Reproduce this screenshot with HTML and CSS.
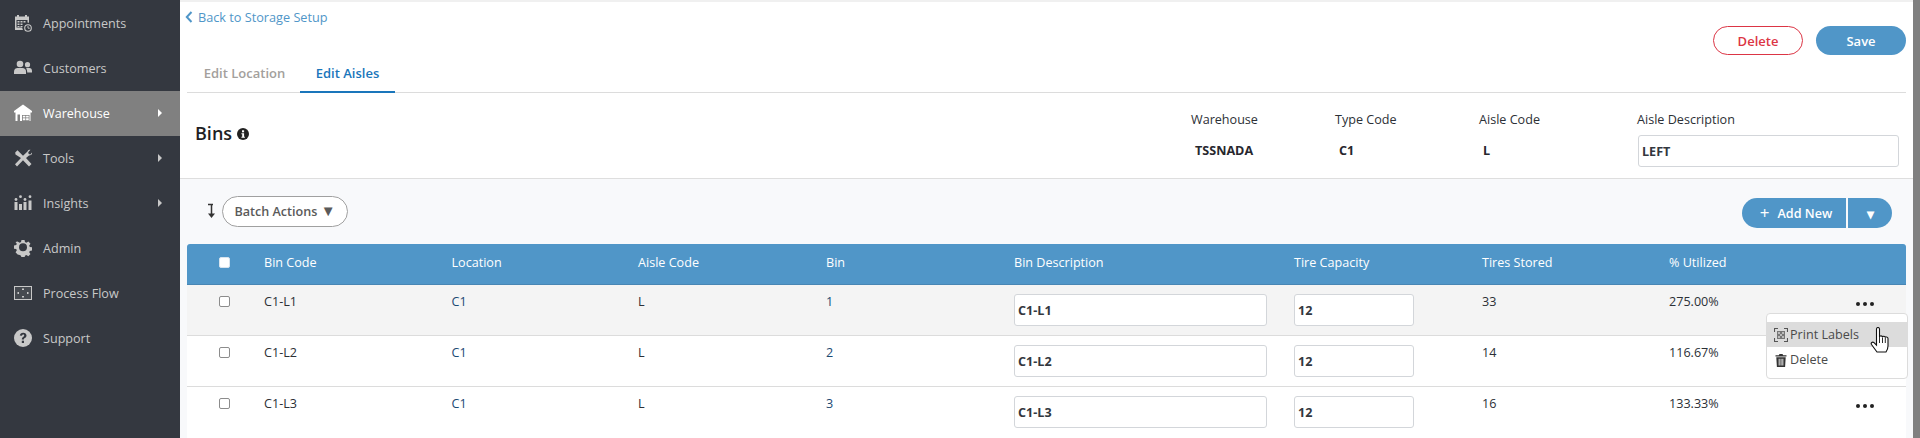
FILE: index.html
```html
<!DOCTYPE html>
<html lang="en">
<head>
<meta charset="utf-8">
<title>Bins</title>
<link rel="stylesheet" href="styles.css">
</head>
<body>
<div class="app">
  <nav class="sidebar">
    <a class="nav-item"><svg class="nav-icon" viewBox="0 0 18 18"><path d="M1 2.500h2V1h2v1.500h6V1h2v1.500h2v6.300a5 5 0 0 0-6 7.200H1z" fill="#c8c8c8"/><path d="M2.500 6h11v3h-2v2h-2v2.500h-7z" fill="#343840"/><path d="M3.500 7h2v1.500h-2zM6.500 7h2v1.500h-2zM9.500 7h2v1.500h-2zM3.500 9.500h2V11h-2zM6.500 9.500h2V11h-2zM3.500 12h2v1h-2zM6.500 12h2v1h-2z" fill="#c8c8c8"/><circle cx="14" cy="14" r="3.300" fill="none" stroke="#c8c8c8" stroke-width="1.100"/><path d="M14 12v2.200h1.800" fill="none" stroke="#c8c8c8" stroke-width=".9"/></svg><span>Appointments</span></a>
    <a class="nav-item"><svg class="nav-icon" viewBox="0 0 18 18"><circle cx="6" cy="5" r="3.300" fill="#c8c8c8"/><circle cx="13.500" cy="5.700" r="2.600" fill="#c8c8c8"/><path d="M0 15v-2.500C0 10 2 9 3.500 9h5C10.500 9 12 10.500 12 12.500V15z" fill="#c8c8c8"/><path d="M13 9h2.500C17 9 18 10.200 18 12v1.500h-4.800c0-1.800-.2-3-1.200-4z" fill="#c8c8c8"/></svg><span>Customers</span></a>
    <a class="nav-item is-active"><svg class="nav-icon" viewBox="0 0 18 18"><path d="M9 .5 18 7v1.500h-1.500V17h-15V8.500H0V7z" fill="#fff"/><path d="M3.500 10.500h2.500V17H3.500zM8 11h7.500v6H8z" fill="#808080"/><path d="M8.800 11.700h2.600v1.900H8.800zM12.100 11.700h2.600v1.900h-2.600zM8.800 14.300h2.600v1.900H8.800zM12.100 14.300h2.600v1.900h-2.600z" fill="#fff"/></svg><span>Warehouse</span><i class="nav-caret"></i></a>
    <a class="nav-item"><svg class="nav-icon" viewBox="0 0 18 18"><path d="M1.200 3.500 3.500 1.200 9 6.700 13.500 2.500C14 1 15 .8 16.500.8l-2.300 2.400.5 1.700 1.700.5L18.500 3c0 2-1 3.500-3.500 3.500L12 9l5.500 6-2.500 2.500L9 11.300 3 17.400 1 15.200 7 9 1.500 5.500z" fill="#c8c8c8"/></svg><span>Tools</span><i class="nav-caret"></i></a>
    <a class="nav-item"><svg class="nav-icon" viewBox="0 0 18 18"><g fill="#c8c8c8"><rect x=".5" y="8" width="3" height="8"/><rect x="5" y="10" width="3" height="6"/><rect x="9.500" y="8" width="3" height="8"/><rect x="14.500" y="6.500" width="3" height="9.500"/><circle cx="2" cy="5.500" r="1.400"/><circle cx="6.500" cy="2.700" r="1.400"/><circle cx="11" cy="5.500" r="1.400"/><circle cx="16" cy="2.700" r="1.400"/></g></svg><span>Insights</span><i class="nav-caret"></i></a>
    <a class="nav-item"><svg class="nav-icon" viewBox="0 0 18 18"><path d="M7.300 0h3.400l.5 2.400 1.500.7L15 1.800l2.300 2.500-1.400 2 .6 1.500 2.500.5v3.400l-2.500.5-.6 1.500 1.400 2-2.300 2.500-2.300-1.300-1.500.7-.5 2.400H7.300l-.5-2.400-1.500-.7L3 16.200.7 13.700l1.400-2-.6-1.500L-1 9.700V6.300l2.500-.5.6-1.500-1.400-2L3 1.800l2.300 1.300 1.500-.7z" transform="translate(.9 .9) scale(.9)" fill="#c8c8c8"/><circle cx="9" cy="8.300" r="4" fill="#343840"/></svg><span>Admin</span></a>
    <a class="nav-item"><svg class="nav-icon" viewBox="0 0 18 18"><rect x=".5" y="2.500" width="17" height="13" fill="#464a50" stroke="#c8c8c8"/><path d="M8 4.500h2v1.500H8zM8 12h2v1.500H8zM3.500 8h1.500v2H3.500zM13 8h1.500v2H13z" fill="#c8c8c8"/></svg><span>Process Flow</span></a>
    <a class="nav-item"><svg class="nav-icon" viewBox="0 0 18 18"><circle cx="9" cy="9" r="9" fill="#c8c8c8"/><path d="M5.800 6.600C6 4.700 7.300 3.700 9.200 3.700c2 0 3.300 1.200 3.300 2.800 0 1.400-.8 2-1.700 2.600-.7.500-.9.800-.9 1.500H7.800c0-1.300.4-2 1.300-2.600.7-.5 1.100-.8 1.100-1.400 0-.6-.4-1-1-1-.7 0-1.100.4-1.200 1.100z" fill="#343840"/><rect x="7.800" y="11.700" width="2.200" height="2.300" fill="#343840"/></svg><span>Support</span></a>
  </nav>

  <main class="content">
    <header class="top">
      <div class="top-bar">
        <a class="back"><svg class="back-icon" viewBox="0 0 8 12"><path d="M6.500 1 1.800 6l4.700 5" fill="none" stroke="#5096c8" stroke-width="2"/></svg>Back to Storage Setup</a>
        <div class="actions">
          <button class="btn btn-delete">Delete</button>
          <button class="btn btn-save">Save</button>
        </div>
      </div>
      <div class="tabs">
        <a class="tab">Edit Location</a>
        <a class="tab is-current">Edit Aisles</a>
      </div>
      <div class="details">
        <h1 class="title">Bins <svg class="info" viewBox="0 0 12 12"><circle cx="6" cy="6" r="6" fill="#222"/><rect x="5" y="2.300" width="2.100" height="2" fill="#fff"/><path d="M4.400 5.200h2.700v3.500h.8v1.100H4.400V8.700h.8V6.300h-.8z" fill="#fff"/></svg></h1>
        <div class="meta">
          <div class="meta-col mc-1"><span class="meta-label">Warehouse</span><b class="meta-value">TSSNADA</b></div>
          <div class="meta-col mc-2"><span class="meta-label">Type Code</span><b class="meta-value">C1</b></div>
          <div class="meta-col mc-3"><span class="meta-label">Aisle Code</span><b class="meta-value">L</b></div>
          <div class="meta-col mc-4"><span class="meta-label">Aisle Description</span><input class="field field-desc" value="LEFT"></div>
        </div>
      </div>
    </header>

    <section class="panel">
      <div class="toolbar">
        <div class="batch">
          <svg class="sort-icon" viewBox="0 0 9 16"><path d="M1 1.500h5M4.500 1.500v11" fill="none" stroke="#333" stroke-width="1.500"/><path d="M1 10.500h7L4.500 15z" fill="#333"/></svg>
          <button class="pill">Batch Actions <span class="pill-caret">▼</span></button>
        </div>
        <div class="split">
          <button class="split-main"><span class="plus">+</span>Add New</button>
          <button class="split-arrow">▾</button>
        </div>
      </div>

      <div class="table">
        <div class="row row-head">
          <div class="cell cell-check"><span class="check check-head"></span></div>
          <div class="cell">Bin Code</div>
          <div class="cell">Location</div>
          <div class="cell">Aisle Code</div>
          <div class="cell">Bin</div>
          <div class="cell">Bin Description</div>
          <div class="cell">Tire Capacity</div>
          <div class="cell">Tires Stored</div>
          <div class="cell">% Utilized</div>
          <div class="cell"></div>
        </div>
        <div class="row row-body row-hover">
          <div class="cell cell-check"><span class="check"></span></div>
          <div class="cell">C1-L1</div>
          <div class="cell link">C1</div>
          <div class="cell">L</div>
          <div class="cell link">1</div>
          <div class="cell"><input class="field field-bin" value="C1-L1"></div>
          <div class="cell"><input class="field field-cap" value="12"></div>
          <div class="cell">33</div>
          <div class="cell">275.00%</div>
          <div class="cell cell-more"><span class="dots"><i></i><i></i><i></i></span>
            <div class="menu">
              <a class="menu-item is-hot"><svg class="menu-icon" viewBox="0 0 14 14"><path d="M.5 4V.5H4M10 .5h3.500V4M13.500 10v3.500H10M4 13.500H.5V10" fill="none" stroke="#555" stroke-width="1.100"/><rect x="3" y="3" width="8" height="8" fill="#777"/><path d="M4 4h2v2H4zM8 4h2v2H8zM6 6h2v2H6zM4 8h2v2H4zM8 8h2v2H8z" fill="#bbb"/></svg>Print Labels</a>
              <a class="menu-item"><svg class="menu-icon" viewBox="0 0 14 14"><path d="M1.500 2.200h3.300L5.500 1h3l.7 1.200h3.300v1.300h-11zM2.300 4.300h9.400l-.6 9.700H2.900z" fill="#333"/><path d="M4.700 5.800h.9v6.600h-.9zM6.600 5.800h.9v6.600h-.9zM8.400 5.800h.9v6.600h-.9z" fill="#fff"/></svg>Delete</a>
              <svg class="hand" viewBox="0 0 20 26"><path d="M6.500 2c0-2 3-2 3 0v8c0-1.500 3-1.500 3 .3 0-1.500 2.800-1.500 2.800.4 0-1.200 2.700-1 2.700.8v7.500c0 3-1 4.500-2 6H7c-1.500-2-3-4-5.500-7.500-1-1.500 1-3.200 2.500-1.800l2.500 2.500z" fill="#fff" stroke="#111" stroke-width="1.100"/><path d="M9.500 10v6M12.500 10.500v5.500M15.300 11v5" stroke="#111" stroke-width=".9" fill="none"/></svg>
            </div>
          </div>
        </div>
        <div class="row row-body">
          <div class="cell cell-check"><span class="check"></span></div>
          <div class="cell">C1-L2</div>
          <div class="cell link">C1</div>
          <div class="cell">L</div>
          <div class="cell link">2</div>
          <div class="cell"><input class="field field-bin" value="C1-L2"></div>
          <div class="cell"><input class="field field-cap" value="12"></div>
          <div class="cell">14</div>
          <div class="cell">116.67%</div>
          <div class="cell"></div>
        </div>
        <div class="row row-body row-last">
          <div class="cell cell-check"><span class="check"></span></div>
          <div class="cell">C1-L3</div>
          <div class="cell link">C1</div>
          <div class="cell">L</div>
          <div class="cell link">3</div>
          <div class="cell"><input class="field field-bin" value="C1-L3"></div>
          <div class="cell"><input class="field field-cap" value="12"></div>
          <div class="cell">16</div>
          <div class="cell">133.33%</div>
          <div class="cell cell-more"><span class="dots"><i></i><i></i><i></i></span></div>
        </div>
      </div>
    </section>
  </main>
  <div class="scrollbar"></div>
</div>
</body>
</html>
```
FILE: styles.css
```css
* { box-sizing: border-box; }
html, body { margin: 0; height: 438px; overflow: hidden; }
body { font-family: "Open Sans", "Noto Sans", sans-serif; font-size: 12.600px; color: #2c3036; background: #fff; }
button, input { font-family: inherit; }

.app { display: flex; height: 438px; }

.sidebar { width: 180px; flex: none; background: #343840; padding-top: 1px; }
.nav-item { display: flex; align-items: center; height: 45px; padding: 0 0 1px 14px; color: #c8c8c8; font-size: 12.600px; position: relative; }
.nav-item span { margin-left: 11px; }
.nav-icon { width: 18px; height: 18px; flex: none; }
.nav-item.is-active { background: #808080; color: #fff; }
.nav-caret { position: absolute; left: 158px; top: 18px; border-left: 4px solid currentColor; border-top: 4px solid transparent; border-bottom: 4px solid transparent; }

.content { flex: 1; min-width: 0; display: flex; flex-direction: column; border-top: 2px solid #f0f0f0; }
.scrollbar { width: 7px; flex: none; background: #808080; }

.top { padding: 0 7px 0 7px; background: #fff; }
.top-bar { display: flex; justify-content: space-between; height: 51px; }
.back { display: flex; align-items: center; gap: 5px; height: 14px; margin-top: 8px; margin-left: -2px; color: #5096c8; font-size: 12.700px; white-space: nowrap; }
.back-icon { width: 8px; height: 12px; }
.actions { display: flex; gap: 13px; padding-top: 24px; }
.btn { width: 90px; height: 29px; border-radius: 15px; font-size: 13px; font-weight: 600; padding: 0; }
.btn-delete { background: #fff; border: 1px solid #dc3545; color: #dc3545; }
.btn-save { background: #5096c8; border: 0; color: #fff; }

.tabs { display: flex; height: 40px; border-bottom: 1px solid #dcdcdc; padding-left: 2px; }
.tab { height: 40px; padding-top: 11px; font-weight: 600; font-size: 13px; color: #a3a09c; width: 111px; text-align: center; }
.tab.is-current { color: #1a76bb; border-bottom: 2px solid #1a76bb; width: 95px; }

.details { display: flex; justify-content: space-between; height: 86px; margin: 0 -7px; padding-left: 15px; border-bottom: 1px solid #dedede; }
.title { margin: 28px 0 0; font-size: 18px; font-weight: 600; color: #1f1f24; line-height: 24px; height: 24px; display: flex; align-items: center; gap: 5px; }
.info { width: 12px; height: 12px; margin-top: 2px; }
.meta { display: flex; width: 722px; padding-top: 18px; }
.meta-col { display: flex; flex-direction: column; }
.mc-1 { width: 144px; }
.mc-2 { width: 144px; }
.mc-3 { width: 158px; }
.mc-4 { width: 276px; }
.meta-label { height: 18px; line-height: 18px; white-space: nowrap; }
.meta-value { margin-top: 13px; margin-left: 4px; font-size: 12.600px; font-weight: 700; line-height: 18px; color: #27272e; }
.field { display: block; border: 1px solid #d3d6da; border-radius: 3px; background: #fff; font-size: 12.600px; font-weight: 700; color: #33373e; padding: 0 3px; outline: none; }
.field-desc { width: 261px; height: 32px; margin-top: 6px; margin-left: 1px; }

.panel { flex: 1; background: #f8f9fb; padding: 0 7px; min-height: 0; }
.toolbar { display: flex; justify-content: space-between; height: 65px; }
.batch { display: flex; align-items: flex-start; padding: 17px 0 0 20px; gap: 6px; }
.sort-icon { width: 9px; height: 16px; margin-top: 7px; }
.pill { width: 126px; height: 31px; border: 1px solid #a0a0a0; border-radius: 16px; background: #fff; color: #5a5a5a; font-size: 12.600px; font-weight: 600; padding: 0; }
.pill-caret { font-size: 15px; line-height: 1; }
.split { display: flex; gap: 2px; padding: 19px 14px 0 0; }
.split-main, .split-arrow { height: 30px; border: 0; background: #5096c8; color: #fff; font-size: 12.600px; font-weight: 600; padding: 0; }
.split-main { width: 104px; border-radius: 15px 0 0 15px; padding-left: 4px; }
.plus { font-size: 17px; font-weight: 400; margin-right: 8px; line-height: 1; vertical-align: -1px; }
.split-arrow { width: 44px; border-radius: 0 15px 15px 0; font-size: 14px; }

.table { background: #fff; }
.row { display: grid; grid-template-columns: 77px 187.500px 186.500px 188px 188px 280px 188px 187px 1fr 50px; }
.row-head { height: 41px; background: #5096c8; color: #fff; border-radius: 3px 3px 0 0; border-bottom: 1px solid #4886b4; align-items: center; }
.row-head .cell { margin-top: -2px; }
.row-head .cell-check { margin-top: -3px; }
.row-body { height: 51px; border-bottom: 1px solid #dcdcdc; background: #fff; padding-top: 8px; }
.row-hover { background: #f4f4f4; }
.row-last { border-bottom: 0; }
.cell { white-space: nowrap; color: inherit; line-height: 18px; }
.link { color: #1c4a73; }
.cell-check { padding-left: 32px; }
.check { display: block; width: 11px; height: 11px; border: 1px solid #8c8c8c; border-radius: 2px; background: #fff; margin-top: 3px; }
.check-head { border-color: #d8e4ee; margin-top: 0; }
.field-bin { width: 253px; height: 32px; margin-top: 1px; }
.field-cap { width: 120px; height: 32px; margin-top: 1px; }
.cell-more { position: relative; }
.dots { display: flex; gap: 3px; position: absolute; left: 0; top: 9px; }
.dots i { width: 4px; height: 4px; border-radius: 50%; background: #222; }
.menu { position: absolute; left: -90px; top: 20px; width: 142px; height: 66px; padding-top: 8px; background: #fff; border: 1px solid #dcdcdc; border-radius: 4px; z-index: 2; }
.menu-item { display: flex; align-items: center; gap: 2px; height: 25px; padding-left: 7px; color: #4a4a4a; line-height: 25px; }
.menu-item.is-hot { background: #dcdcdc; }
.menu-icon { width: 14px; height: 14px; flex: none; margin-top: 1px; }
.hand { position: absolute; left: 103px; top: 13px; width: 20px; height: 26px; }
```
